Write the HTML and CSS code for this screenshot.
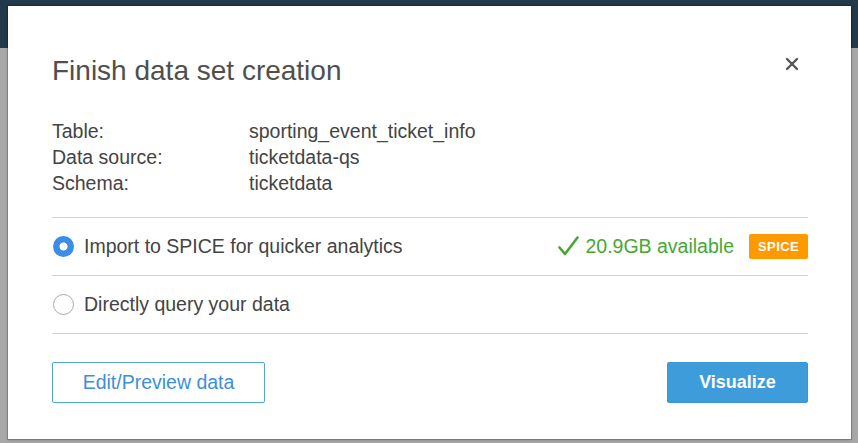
FILE: index.html
```html
<!DOCTYPE html>
<html>
<head>
<meta charset="utf-8">
<link rel="stylesheet" href="styles.css">
</head>
<body>
<div class="page">
  <div class="modal">
    <div class="header">
      <h1 class="title">Finish data set creation</h1>
      <button class="close" aria-label="Close">
        <svg width="14" height="14" viewBox="0 0 14 14"><path d="M2 2 L12 12 M12 2 L2 12" stroke="#555" stroke-width="2.4" stroke-linecap="round"/></svg>
      </button>
    </div>
    <div class="info">
      <div class="label">Table:</div><div class="value">sporting_event_ticket_info</div>
      <div class="label">Data source:</div><div class="value">ticketdata-qs</div>
      <div class="label">Schema:</div><div class="value">ticketdata</div>
    </div>
    <div class="options">
      <div class="option">
        <span class="radio checked"></span>
        <span class="opt-text">Import to SPICE for quicker analytics</span>
        <span class="avail">
          <svg class="check" width="21" height="20" viewBox="0 0 21 20"><path d="M1.5 11.5 L7 18 L19.5 1.5" fill="none" stroke="#46a832" stroke-width="2.6" stroke-linecap="round" stroke-linejoin="round"/></svg>
          20.9GB available
        </span>
        <span class="badge">SPICE</span>
      </div>
      <div class="option">
        <span class="radio"></span>
        <span class="opt-text">Directly query your data</span>
      </div>
    </div>
    <div class="actions">
      <button class="btn btn-outline">Edit/Preview data</button>
      <button class="btn btn-primary">Visualize</button>
    </div>
  </div>
</div>
</body>
</html>
```

FILE: styles.css
```css
html, body {
  margin: 0;
  padding: 0;
}
body {
  width: 858px;
  height: 443px;
  overflow: hidden;
  background: linear-gradient(#21394a 0, #21394a 48px, #a8a8a8 48px, #a8a8a8 100%);
  font-family: "Liberation Sans", Arial, sans-serif;
}
.page {
  padding: 6px 7px 0 8px;
}
.modal {
  width: 843px;
  height: 433px;
  box-sizing: border-box;
  background: #fff;
  box-shadow: 0 0 0 1px rgba(0,0,0,0.18), 0 1px 3px rgba(0,0,0,0.2);
  padding: 48px 43px 0 44px;
}
.header {
  display: flex;
  justify-content: space-between;
  align-items: center;
  height: 34px;
}
.title {
  margin: 0;
  font-size: 28px;
  line-height: 34px;
  font-weight: normal;
  color: #4f4f4f;
}
.close {
  border: 0;
  background: none;
  padding: 0;
  margin-right: 9px;
  margin-top: -14px;
  width: 14px;
  height: 14px;
  display: flex;
}
.info {
  margin-top: 30px;
  display: grid;
  grid-template-columns: 197px 1fr;
  font-size: 19.5px;
  line-height: 26px;
  color: #444;
}
.options {
  margin-top: 21px;
  border-top: 1px solid #d3d3d3;
}
.option {
  height: 57px;
  border-bottom: 1px solid #d3d3d3;
  display: flex;
  align-items: center;
  font-size: 19.5px;
  color: #444;
}
.radio {
  width: 19px;
  height: 19px;
  border-radius: 50%;
  border: 1px solid #a9a9a9;
  background: #fff;
  margin-left: 1px;
  margin-right: 10px;
  box-sizing: content-box;
  flex: none;
}
.radio.checked {
  width: 21px;
  height: 21px;
  border: 0;
  background: radial-gradient(circle, #fff 0, #fff 3.6px, #3b8de8 4.4px);
  margin-right: 10px;
}
.opt-text {
  flex: 1;
}
.avail {
  display: flex;
  align-items: center;
  color: #46a832;
}
.check {
  margin-right: 6px;
  margin-top: -2px;
}
.badge {
  margin-left: 15px;
  width: 59px;
  height: 25px;
  background: #ff9900;
  color: #fff;
  border-radius: 2px;
  font-size: 13px;
  font-weight: bold;
  letter-spacing: 0.4px;
  display: flex;
  align-items: center;
  justify-content: center;
}
.actions {
  margin-top: 28px;
  display: flex;
  justify-content: space-between;
}
.btn {
  height: 41px;
  box-sizing: border-box;
  border-radius: 2px;
  font-family: "Liberation Sans", Arial, sans-serif;
  padding: 0;
}
.btn-outline {
  width: 213px;
  background: #fff;
  border: 1px solid #4ea5e0;
  color: #3d8fd8;
  font-size: 19.5px;
}
.btn-primary {
  width: 141px;
  background: #3e9cdb;
  border: 1px solid #3a96d4;
  color: #fff;
  font-size: 18px;
  font-weight: bold;
}
```
